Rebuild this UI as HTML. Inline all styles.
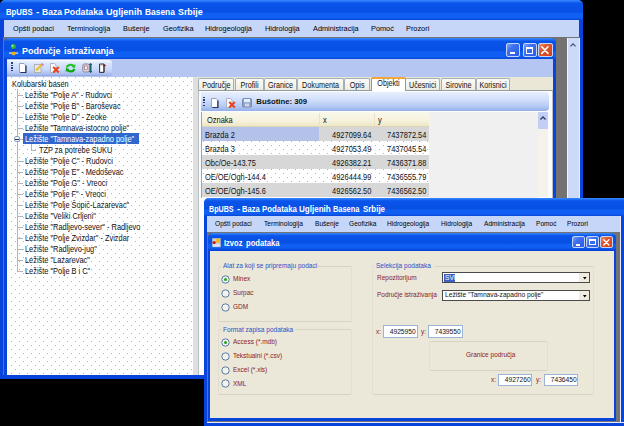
<!DOCTYPE html>
<html><head><meta charset="utf-8">
<style>
*{margin:0;padding:0;box-sizing:border-box}
html,body{width:624px;height:426px;overflow:hidden;background:#000}
body{position:relative;font-family:"Liberation Sans",sans-serif}
.a{position:absolute}
.t{position:absolute;line-height:0;white-space:nowrap;font-family:"Liberation Sans",sans-serif;color:#000;transform-origin:0 50%}
.tb{background:linear-gradient(#3c88f8 0,#2070f8 8%,#0a54ea 16%,#0850e4 58%,#0e5ff2 68%,#0e5ff2 88%,#0a4ee0 96%,#0846d8 100%)}
svg{position:absolute;overflow:visible}
.m1{font-size:8.085px;color:#000;transform:scaleX(0.9091);}
.tr{font-size:8.732px;color:#111;transform:scaleX(0.8475);}
.g{font-size:8.791px;color:#111;transform:scaleX(0.8475);}
.tab{font-size:8.496px;color:#111;transform:scaleX(0.8475);}
.w2{font-size:7.670px;color:#8a1c1c;transform:scaleX(0.8475);}
.w2b{font-size:7.729px;color:#2d50c8;transform:scaleX(0.8475);}
.m2{font-size:7.26px;color:#000;transform:scaleX(0.9091);}
</style></head><body>
<div class="a" style="left:0px;top:0px;width:583px;height:379px;background:#0844dc;border-radius:5px 5px 0 0"></div>
<div class="a tb" style="left:0px;top:0px;width:583px;height:20px;border-radius:5px 5px 0 0"></div>
<div class="t" style="left:5.8px;top:11.8px;font-size:9.9px;font-weight:bold;color:#fff;transform:scaleX(0.7830)">BpUBS</div>
<div class="t" style="left:35.8px;top:11.8px;font-size:9.9px;font-weight:bold;color:#fff;transform:scaleX(1.0309)">-</div>
<div class="t" style="left:41.7px;top:11.8px;font-size:9.9px;font-weight:bold;color:#fff;transform:scaleX(0.8654)">Baza</div>
<div class="t" style="left:64.3px;top:11.8px;font-size:9.9px;font-weight:bold;color:#fff;transform:scaleX(0.8860)">Podataka</div>
<div class="t" style="left:106.2px;top:11.8px;font-size:9.9px;font-weight:bold;color:#fff;transform:scaleX(0.9245)">Ugljenih</div>
<div class="t" style="left:144.8px;top:11.8px;font-size:9.9px;font-weight:bold;color:#fff;transform:scaleX(0.8518)">Basena</div>
<div class="t" style="left:177.6px;top:11.8px;font-size:9.9px;font-weight:bold;color:#fff;transform:scaleX(0.8978)">Srbije</div>
<div class="a" style="left:3.7px;top:20px;width:575.8px;height:17px;background:#c6d6f8"></div>
<div class="a" style="left:4px;top:36.5px;width:575px;height:1.5px;background:#9aa4b8"></div>
<div class="t m1" style="left:12.8px;top:29px;">Opšti podaci</div>
<div class="t m1" style="left:67.2px;top:29px;">Terminologija</div>
<div class="t m1" style="left:123px;top:29px;">Bušenje</div>
<div class="t m1" style="left:162.8px;top:29px;">Geofizika</div>
<div class="t m1" style="left:205.1px;top:29px;">Hidrogeologija</div>
<div class="t m1" style="left:265.4px;top:29px;">Hidrologija</div>
<div class="t m1" style="left:312.8px;top:29px;">Administracija</div>
<div class="t m1" style="left:371.3px;top:29px;">Pomoć</div>
<div class="t m1" style="left:406.4px;top:29px;">Prozori</div>
<div class="a" style="left:3px;top:37px;width:577px;height:338px;background:#737373"></div>
<div class="a" style="left:567px;top:38px;width:12.5px;height:337px;background:#cdd9f8;border-left:1px solid #f4f6fe;border-right:1px solid #eef0fa"></div>
<svg style="left:569.8px;top:42.6px" width="6" height="4"><path d="M0.5 3.3 L3 0.8 L5.5 3.3" stroke="#3a4a78" stroke-width="1.2" fill="none"/></svg>
<div class="a" style="left:4px;top:38px;width:552px;height:340px;background:#0844dc;border-radius:5px 5px 0 0"></div>
<div class="a tb" style="left:4px;top:38px;width:552px;height:21px;border-radius:5px 5px 0 0"></div>
<div class="a" style="left:505.9px;top:43px;width:14.5px;height:14px;background:linear-gradient(135deg,#7ea4fb 0,#3f72ef 35%,#2a5ae6 100%);border:1px solid #c4d4fa;border-radius:2px"></div>
<div class="a" style="left:509.79999999999995px;top:52.1px;width:5.2px;height:1.8px;background:#fff"></div>
<div class="a" style="left:522.6px;top:43px;width:14.5px;height:14px;background:linear-gradient(135deg,#7ea4fb 0,#3f72ef 35%,#2a5ae6 100%);border:1px solid #c4d4fa;border-radius:2px"></div>
<div class="a" style="left:526.0px;top:46.5px;width:7.3px;height:7.3px;border:1px solid #fff;border-top-width:2px"></div>
<div class="a" style="left:538.3px;top:43px;width:14.5px;height:14px;background:linear-gradient(135deg,#f0906a 0,#e2582e 35%,#d43e14 100%);border:1px solid #c4d4fa;border-radius:2px"></div>
<svg style="left:541.4px;top:46.0px" width="7.8" height="8.2"><path d="M0.8 0.8 L7.0 7.3999999999999995 M7.0 0.8 L0.8 7.3999999999999995" stroke="#fff" stroke-width="1.6" stroke-linecap="round"/></svg>
<svg style="left:8.8px;top:43.5px" width="10" height="12" viewBox="0 0 10 12"><path d="M4.5 3 V8" stroke="#203050" stroke-width="1.2"/><circle cx="4.3" cy="2.6" r="2.5" fill="#30b040"/><circle cx="3.6" cy="1.8" r="1" fill="#a0f0a0"/><path d="M0 9.1 H9" stroke="#e8e0d0" stroke-width="1.3"/><ellipse cx="4.6" cy="9.4" rx="2" ry="1.9" fill="#f0b020"/></svg>
<div class="t" style="left:22px;top:50.8px;font-size:9.6px;font-weight:bold;color:#fff;transform:scaleX(0.9373)">Područje</div>
<div class="t" style="left:63.7px;top:50.8px;font-size:9.6px;font-weight:bold;color:#fff;transform:scaleX(0.9504)">istraživanja</div>
<div class="a" style="left:7px;top:59px;width:546px;height:18px;background:#b6c6f2"></div>
<div class="a" style="left:7px;top:59.6px;width:105px;height:16px;border-radius:0 3px 3px 0;background:linear-gradient(#f4f8ff 0,#dce7fd 20%,#c8d8fb 60%,#a8bcee 90%,#8ca4e0 100%)"></div>
<div class="a" style="left:11px;top:62.0px;width:1.5px;height:1.5px;background:#2c3e7a"></div>
<div class="a" style="left:11px;top:64.6px;width:1.5px;height:1.5px;background:#2c3e7a"></div>
<div class="a" style="left:11px;top:67.2px;width:1.5px;height:1.5px;background:#2c3e7a"></div>
<div class="a" style="left:11px;top:69.8px;width:1.5px;height:1.5px;background:#2c3e7a"></div>
<svg style="left:19px;top:63px" width="8" height="10" viewBox="0 0 8 10"><path d="M0.5 0.5 H5 L7.5 3 V9.5 H0.5 Z" fill="#fdfdfd" stroke="#8090b0" stroke-width="0.8"/><path d="M6.8 2.5 V9.5 H1.5" stroke="#26306a" stroke-width="1.2" fill="none"/></svg>
<svg style="left:34.3px;top:62.8px" width="10" height="10" viewBox="0 0 10 10"><rect x="0.5" y="1.5" width="6.5" height="8" fill="#e8e8e4" stroke="#a8a8a0" stroke-width="0.8"/><path d="M2 7.5 L8.5 1" stroke="#e8c040" stroke-width="2.2"/><path d="M7.5 0.5 L9.5 2.5" stroke="#e070b0" stroke-width="1.6"/></svg>
<svg style="left:50.2px;top:63px" width="10" height="10" viewBox="0 0 10 10"><path d="M0.5 0.5 H4.5 L6 2 V9.5 H0.5 Z" fill="#f8f8f8" stroke="#a0a8b8" stroke-width="0.8"/><path d="M3.2 4 L8.8 9.5 M8.8 4 L3.2 9.5" stroke="#e8401a" stroke-width="1.9"/></svg>
<svg style="left:65.2px;top:62.6px" width="11" height="10" viewBox="0 0 11 10"><path d="M1.5 4.5 C2.5 1.5 7 0.8 9 3.2" stroke="#22c022" stroke-width="2.2" fill="none"/><path d="M10.5 1 L10 5 L6.5 4 Z" fill="#22c022"/><path d="M9.5 5.8 C8.5 8.8 4 9.2 2 6.8" stroke="#10a810" stroke-width="2.2" fill="none"/><path d="M0.5 9 L1 5 L4.5 6 Z" fill="#10a810"/></svg>
<svg style="left:81.5px;top:62.8px" width="10" height="10" viewBox="0 0 10 10"><rect x="0.8" y="1" width="6.5" height="8" rx="1.5" fill="#e6d0d8" stroke="#808090" stroke-width="0.9"/><rect x="2.5" y="3" width="3" height="3.5" fill="#f8f0f0" stroke="#906878" stroke-width="0.6"/><path d="M8.6 0.5 V9.5" stroke="#20606a" stroke-width="1.8"/><path d="M7.2 2 L8.6 0.5 L10 2 M7.2 8 L8.6 9.5 L10 8" stroke="#20606a" stroke-width="1" fill="none"/></svg>
<svg style="left:98.5px;top:62.8px" width="8" height="10" viewBox="0 0 8 10"><path d="M0.5 1 H5 V9.5 H0.5 Z" fill="#d8d8d8" stroke="#404040" stroke-width="1"/><rect x="1.6" y="3" width="2.5" height="5" fill="#fff"/><path d="M4.5 1 L7.5 2.5 L4.5 4" fill="#e02020"/><path d="M5 1 V9" stroke="#303030" stroke-width="1"/></svg>
<div class="a" style="left:7px;top:77px;width:186px;height:298px;background:#fff"></div>
<svg style="left:8px;top:77px" width="185" height="298"><defs><pattern id="dp1" patternUnits="userSpaceOnUse" x="-8" y="-77" width="8" height="8"><rect x="3" y="5" width="1" height="1" fill="#b4b4b4"/><rect x="7" y="1" width="1" height="1" fill="#b4b4b4"/></pattern></defs><rect width="185" height="298" fill="url(#dp1)"/></svg>
<div class="a" style="left:193px;top:77px;width:4.5px;height:298px;background:#dfdfe0"></div>
<div class="a" style="left:197.5px;top:77px;width:355.5px;height:13px;background:#ebe7d6"></div>
<div class="a" style="left:17px;top:89.2px;width:1px;height:181.5px;background:#b4b4b4"></div>
<div class="t tr" style="left:11.8px;top:83.7px;">Kolubarski basen</div>
<div class="a" style="left:17px;top:94.7px;width:6px;height:1px;background:#b4b4b4"></div>
<div class="t tr" style="left:24.9px;top:94.7px;">Ležište "Polje A" - Rudovci</div>
<div class="a" style="left:17px;top:105.7px;width:6px;height:1px;background:#b4b4b4"></div>
<div class="t tr" style="left:24.9px;top:105.7px;">Ležište "Polje B" - Baroševac</div>
<div class="a" style="left:17px;top:116.7px;width:6px;height:1px;background:#b4b4b4"></div>
<div class="t tr" style="left:24.9px;top:116.7px;">Ležište "Polje D" - Zeoke</div>
<div class="a" style="left:17px;top:127.7px;width:6px;height:1px;background:#b4b4b4"></div>
<div class="t tr" style="left:24.9px;top:127.7px;">Ležište "Tamnava-istocno polje"</div>
<div class="a" style="left:17px;top:138.7px;width:6px;height:1px;background:#b4b4b4"></div>
<div class="a" style="left:13.8px;top:135.7px;width:6.5px;height:6.5px;background:#f4f4f0;border:1px solid #8da0b8;border-radius:2px"></div>
<div class="a" style="left:15.3px;top:138.5px;width:3.5px;height:1px;background:#203060"></div>
<div class="a" style="left:23px;top:133.2px;width:115.5px;height:11px;background:#3166cc"></div>
<div class="t tr" style="left:24.9px;top:138.7px;color:#fff">Ležište "Tamnava-zapadno polje"</div>
<div class="a" style="left:31px;top:143.7px;width:1px;height:6.0px;background:#b4b4b4"></div>
<div class="a" style="left:31px;top:149.7px;width:5px;height:1px;background:#b4b4b4"></div>
<div class="t tr" style="left:38.5px;top:149.7px;">TZP za potrebe SUKU</div>
<div class="a" style="left:17px;top:160.7px;width:6px;height:1px;background:#b4b4b4"></div>
<div class="t tr" style="left:24.9px;top:160.7px;">Ležište "Polje C" - Rudovci</div>
<div class="a" style="left:17px;top:171.7px;width:6px;height:1px;background:#b4b4b4"></div>
<div class="t tr" style="left:24.9px;top:171.7px;">Ležište "Polje E" - Medoševac</div>
<div class="a" style="left:17px;top:182.7px;width:6px;height:1px;background:#b4b4b4"></div>
<div class="t tr" style="left:24.9px;top:182.7px;">Ležište "Polje G" - Vreoci</div>
<div class="a" style="left:17px;top:193.7px;width:6px;height:1px;background:#b4b4b4"></div>
<div class="t tr" style="left:24.9px;top:193.7px;">Ležište "Polje F" - Vreoci</div>
<div class="a" style="left:17px;top:204.7px;width:6px;height:1px;background:#b4b4b4"></div>
<div class="t tr" style="left:24.9px;top:204.7px;">Ležište "Polje Šopić-Lazarevac"</div>
<div class="a" style="left:17px;top:215.7px;width:6px;height:1px;background:#b4b4b4"></div>
<div class="t tr" style="left:24.9px;top:215.7px;">Ležište "Veliki Crljeni"</div>
<div class="a" style="left:17px;top:226.7px;width:6px;height:1px;background:#b4b4b4"></div>
<div class="t tr" style="left:24.9px;top:226.7px;">Ležište "Radljevo-sever" - Radljevo</div>
<div class="a" style="left:17px;top:237.7px;width:6px;height:1px;background:#b4b4b4"></div>
<div class="t tr" style="left:24.9px;top:237.7px;">Ležište "Polje Zvizdar" - Zvizdar</div>
<div class="a" style="left:17px;top:248.7px;width:6px;height:1px;background:#b4b4b4"></div>
<div class="t tr" style="left:24.9px;top:248.7px;">Ležište "Radljevo-jug"</div>
<div class="a" style="left:17px;top:259.7px;width:6px;height:1px;background:#b4b4b4"></div>
<div class="t tr" style="left:24.9px;top:259.7px;">Ležište "Lazarevac"</div>
<div class="a" style="left:17px;top:270.7px;width:6px;height:1px;background:#b4b4b4"></div>
<div class="t tr" style="left:24.9px;top:270.7px;">Ležište "Polje B i C"</div>
<div class="a" style="left:197.6px;top:78px;width:36.900000000000006px;height:12.5px;background:linear-gradient(#fbfbf8,#ecebe2);border:1px solid #a7aeb3;border-bottom:none;border-radius:2px 2px 0 0"></div>
<div class="t tab" style="left:197.6px;width:36.900000000000006px;text-align:center;top:84.8px;transform-origin:50% 50%">Područje</div>
<div class="a" style="left:234.5px;top:78px;width:29.0px;height:12.5px;background:linear-gradient(#fbfbf8,#ecebe2);border:1px solid #a7aeb3;border-bottom:none;border-radius:2px 2px 0 0"></div>
<div class="t tab" style="left:234.5px;width:29.0px;text-align:center;top:84.8px;transform-origin:50% 50%">Profili</div>
<div class="a" style="left:263.5px;top:78px;width:33.0px;height:12.5px;background:linear-gradient(#fbfbf8,#ecebe2);border:1px solid #a7aeb3;border-bottom:none;border-radius:2px 2px 0 0"></div>
<div class="t tab" style="left:263.5px;width:33.0px;text-align:center;top:84.8px;transform-origin:50% 50%">Granice</div>
<div class="a" style="left:296.5px;top:78px;width:47.0px;height:12.5px;background:linear-gradient(#fbfbf8,#ecebe2);border:1px solid #a7aeb3;border-bottom:none;border-radius:2px 2px 0 0"></div>
<div class="t tab" style="left:296.5px;width:47.0px;text-align:center;top:84.8px;transform-origin:50% 50%">Dokumenta</div>
<div class="a" style="left:343.5px;top:78px;width:26.30000000000001px;height:12.5px;background:linear-gradient(#fbfbf8,#ecebe2);border:1px solid #a7aeb3;border-bottom:none;border-radius:2px 2px 0 0"></div>
<div class="t tab" style="left:343.5px;width:26.30000000000001px;text-align:center;top:84.8px;transform-origin:50% 50%">Opis</div>
<div class="a" style="left:405.4px;top:78px;width:35.10000000000002px;height:12.5px;background:linear-gradient(#fbfbf8,#ecebe2);border:1px solid #a7aeb3;border-bottom:none;border-radius:2px 2px 0 0"></div>
<div class="t tab" style="left:405.4px;width:35.10000000000002px;text-align:center;top:84.8px;transform-origin:50% 50%">Učesnici</div>
<div class="a" style="left:440.5px;top:78px;width:35.0px;height:12.5px;background:linear-gradient(#fbfbf8,#ecebe2);border:1px solid #a7aeb3;border-bottom:none;border-radius:2px 2px 0 0"></div>
<div class="t tab" style="left:440.5px;width:35.0px;text-align:center;top:84.8px;transform-origin:50% 50%">Sirovine</div>
<div class="a" style="left:475.5px;top:78px;width:34.0px;height:12.5px;background:linear-gradient(#fbfbf8,#ecebe2);border:1px solid #a7aeb3;border-bottom:none;border-radius:2px 2px 0 0"></div>
<div class="t tab" style="left:475.5px;width:34.0px;text-align:center;top:84.8px;transform-origin:50% 50%">Korisnici</div>
<div class="a" style="left:197.5px;top:90px;width:355.5px;height:285px;background:#fcfcfe;border:1px solid #b8c0c8;border-bottom:none;border-top-color:#919b9c"></div>
<div class="a" style="left:370.8px;top:76.6px;width:35px;height:14.5px;background:#fff;border:1px solid #919b9c;border-bottom:none;border-radius:3px 3px 0 0"></div>
<div class="a" style="left:370.8px;top:76.6px;width:35px;height:2px;background:#f3a73a;border-radius:3px 3px 0 0"></div>
<div class="t tab" style="left:370.8px;width:35px;text-align:center;top:83.3px;transform-origin:50% 50%">Objekti</div>
<div class="a" style="left:201px;top:92.4px;width:348px;height:19px;border-radius:0 4px 4px 0;background:linear-gradient(#e8effe 0,#d2e0fb 40%,#b5c9f4 75%,#94afe8 100%)"></div>
<div class="a" style="left:203.2px;top:96.7px;width:1.5px;height:1.5px;background:#2c3e7a"></div>
<div class="a" style="left:203.2px;top:99.3px;width:1.5px;height:1.5px;background:#2c3e7a"></div>
<div class="a" style="left:203.2px;top:101.9px;width:1.5px;height:1.5px;background:#2c3e7a"></div>
<div class="a" style="left:203.2px;top:104.5px;width:1.5px;height:1.5px;background:#2c3e7a"></div>
<svg style="left:211.2px;top:97.5px" width="8" height="10" viewBox="0 0 8 10"><path d="M0.5 0.5 H5 L7.5 3 V9.5 H0.5 Z" fill="#fdfdfd" stroke="#8090b0" stroke-width="0.8"/><path d="M6.8 2.5 V9.5 H1.5" stroke="#26306a" stroke-width="1.2" fill="none"/></svg>
<svg style="left:226px;top:97.5px" width="10" height="10" viewBox="0 0 10 10"><path d="M0.5 0.5 H4.5 L6 2 V9.5 H0.5 Z" fill="#f8f8f8" stroke="#a0a8b8" stroke-width="0.8"/><path d="M3.2 4 L8.8 9.5 M8.8 4 L3.2 9.5" stroke="#e8401a" stroke-width="1.9"/></svg>
<svg style="left:241.8px;top:98px" width="10" height="9" viewBox="0 0 10 9"><rect x="0.5" y="0.5" width="9" height="8.5" rx="1" fill="#8aa0c8" stroke="#6a80a8" stroke-width="0.8"/><rect x="2" y="1" width="6" height="3.2" fill="#e8eef8"/><rect x="2.8" y="5.5" width="4.4" height="3" fill="#d0d8e8"/></svg>
<div class="t " style="left:256.3px;top:101.5px;font-size:7.75px;font-weight:bold;color:#101010">Bušotine: 309</div>
<div class="a" style="left:201px;top:111.5px;width:228.2px;height:85.5px;background:#fff"></div>
<div class="a" style="left:429.2px;top:111.5px;width:108.5px;height:180px;background:#f0f0f0"></div>
<div class="a" style="left:201px;top:111.5px;width:228.2px;height:15.3px;background:linear-gradient(#faf8ec 0,#f6f2dc 60%,#efe8c4 100%);border-bottom:1px solid #dcd6b8"></div>
<div class="a" style="left:318.6px;top:113px;width:1px;height:12px;background:#e6e2d0"></div>
<div class="a" style="left:374.4px;top:113px;width:1px;height:12px;background:#e6e2d0"></div>
<div class="t g" style="left:207px;top:119.7px;">Oznaka</div>
<div class="t g" style="left:323px;top:119.9px;">x</div>
<div class="t g" style="left:377.5px;top:119.9px;">y</div>
<div class="a" style="left:201px;top:126.5px;width:228.2px;height:14px;background:#d7d7d7"></div>
<div class="a" style="left:201px;top:126.5px;width:117.6px;height:14px;background:#b4c2ea"></div>
<div class="t g" style="left:204.9px;top:134.8px;">Brazda 2</div>
<div class="t g" style="right:252.7px;top:134.8px;transform-origin:100% 50%;">4927099.64</div>
<div class="t g" style="right:197.5px;top:134.8px;transform-origin:100% 50%;">7437872.54</div>
<div class="a" style="left:201px;top:140.5px;width:228.2px;height:14px;background:#ffffff"></div>
<svg style="left:202px;top:141px" width="227" height="13"><defs><pattern id="dp2" patternUnits="userSpaceOnUse" x="-202" y="-141" width="8" height="8"><rect x="3" y="5" width="1" height="1" fill="#b4b4b4"/><rect x="7" y="1" width="1" height="1" fill="#b4b4b4"/></pattern></defs><rect width="227" height="13" fill="url(#dp2)"/></svg>
<div class="t g" style="left:204.9px;top:148.8px;">Brazda 3</div>
<div class="t g" style="right:252.7px;top:148.8px;transform-origin:100% 50%;">4927053.49</div>
<div class="t g" style="right:197.5px;top:148.8px;transform-origin:100% 50%;">7437045.54</div>
<div class="a" style="left:201px;top:154.5px;width:228.2px;height:14px;background:#d7d7d7"></div>
<div class="t g" style="left:204.9px;top:162.8px;">Obc/Oe-143.75</div>
<div class="t g" style="right:252.7px;top:162.8px;transform-origin:100% 50%;">4926382.21</div>
<div class="t g" style="right:197.5px;top:162.8px;transform-origin:100% 50%;">7436371.88</div>
<div class="a" style="left:201px;top:168.5px;width:228.2px;height:14px;background:#ffffff"></div>
<svg style="left:202px;top:169px" width="227" height="13"><defs><pattern id="dp3" patternUnits="userSpaceOnUse" x="-202" y="-169" width="8" height="8"><rect x="3" y="5" width="1" height="1" fill="#b4b4b4"/><rect x="7" y="1" width="1" height="1" fill="#b4b4b4"/></pattern></defs><rect width="227" height="13" fill="url(#dp3)"/></svg>
<div class="t g" style="left:204.9px;top:176.8px;">OE/OE/Ogh-144.4</div>
<div class="t g" style="right:252.7px;top:176.8px;transform-origin:100% 50%;">4926444.99</div>
<div class="t g" style="right:197.5px;top:176.8px;transform-origin:100% 50%;">7436555.79</div>
<div class="a" style="left:201px;top:182.5px;width:228.2px;height:14px;background:#d7d7d7"></div>
<div class="t g" style="left:204.9px;top:190.8px;">OE/OE/Ogh-145.6</div>
<div class="t g" style="right:252.7px;top:190.8px;transform-origin:100% 50%;">4926562.50</div>
<div class="t g" style="right:197.5px;top:190.8px;transform-origin:100% 50%;">7436562.50</div>
<div class="a" style="left:201px;top:111.5px;width:1px;height:86px;background:#9aa6b0"></div>
<div class="a" style="left:537.6px;top:112.4px;width:10.6px;height:85px;background:#f4f2ea"></div>
<div class="a" style="left:537.6px;top:112.4px;width:10.6px;height:16.5px;background:#c3cef6;border-radius:1px"></div>
<svg style="left:540px;top:116px" width="6" height="4"><path d="M0.5 3.5 L3 1 L5.5 3.5" stroke="#2a3a6a" stroke-width="1.3" fill="none"/></svg>
<!-- W2 -->
<div class="a" style="left:204px;top:198px;width:424px;height:232px;background:#0844dc;border-radius:5px 5px 0 0"></div>
<div class="a tb" style="left:204px;top:198px;width:424px;height:18px;border-radius:5px 5px 0 0"></div>
<div class="t" style="left:208.6px;top:208.6px;font-size:9.0px;font-weight:bold;color:#fff;transform:scaleX(0.7936)">BpUBS</div>
<div class="t" style="left:237px;top:208.6px;font-size:9.0px;font-weight:bold;color:#fff;transform:scaleX(1.0673)">-</div>
<div class="t" style="left:241.7px;top:208.6px;font-size:9.0px;font-weight:bold;color:#fff;transform:scaleX(0.8424)">Baza</div>
<div class="t" style="left:261.6px;top:208.6px;font-size:9.0px;font-weight:bold;color:#fff;transform:scaleX(0.8721)">Podataka</div>
<div class="t" style="left:298.8px;top:208.6px;font-size:9.0px;font-weight:bold;color:#fff;transform:scaleX(0.8930)">Ugljenih</div>
<div class="t" style="left:333.4px;top:208.6px;font-size:9.0px;font-weight:bold;color:#fff;transform:scaleX(0.8245)">Basena</div>
<div class="t" style="left:362.6px;top:208.6px;font-size:9.0px;font-weight:bold;color:#fff;transform:scaleX(0.8796)">Srbije</div>
<div class="a" style="left:207px;top:216px;width:413.3px;height:16.3px;background:#c6d6f8"></div>
<div class="t m2" style="left:215px;top:224px;">Opšti podaci</div>
<div class="t m2" style="left:263.5px;top:224px;">Terminologija</div>
<div class="t m2" style="left:314.6px;top:224px;">Bušenje</div>
<div class="t m2" style="left:348.8px;top:224px;">Geofizika</div>
<div class="t m2" style="left:387px;top:224px;">Hidrogeologija</div>
<div class="t m2" style="left:440.75px;top:224px;">Hidrologija</div>
<div class="t m2" style="left:483.5px;top:224px;">Administracija</div>
<div class="t m2" style="left:536px;top:224px;">Pomoć</div>
<div class="t m2" style="left:566.75px;top:224px;">Prozori</div>
<div class="a" style="left:207px;top:231.5px;width:413.3px;height:190.5px;background:#737373"></div>
<div class="a" style="left:620.3px;top:216px;width:0.8px;height:207px;background:#e8ecf8"></div>
<div class="a" style="left:207px;top:422px;width:417px;height:1px;background:#e8ecf8"></div>
<div class="a" style="left:208.3px;top:232.6px;width:407.6px;height:188.4px;background:#0844dc;border-radius:5px 5px 0 0"></div>
<div class="a tb" style="left:208.3px;top:232.6px;width:407.6px;height:17.8px;border-radius:5px 5px 0 0"></div>
<div class="a" style="left:572.3px;top:236.4px;width:12.5px;height:11.7px;background:linear-gradient(135deg,#7ea4fb 0,#3f72ef 35%,#2a5ae6 100%);border:1px solid #c4d4fa;border-radius:2px"></div>
<div class="a" style="left:575.6620689655172px;top:244.005px;width:4.482758620689655px;height:1.5042857142857142px;background:#fff"></div>
<div class="a" style="left:586.3px;top:236.4px;width:12.5px;height:11.7px;background:linear-gradient(135deg,#7ea4fb 0,#3f72ef 35%,#2a5ae6 100%);border:1px solid #c4d4fa;border-radius:2px"></div>
<div class="a" style="left:589.2310344827586px;top:239.32500000000002px;width:6.293103448275861px;height:6.100714285714285px;border:1px solid #fff;border-top-width:2px"></div>
<div class="a" style="left:600.4px;top:236.4px;width:12.5px;height:11.7px;background:linear-gradient(135deg,#f0906a 0,#e2582e 35%,#d43e14 100%);border:1px solid #c4d4fa;border-radius:2px"></div>
<svg style="left:603.0724137931035px;top:238.90714285714287px" width="6.724137931034482" height="6.852857142857141"><path d="M0.8 0.8 L5.924137931034482 6.052857142857142 M5.924137931034482 0.8 L0.8 6.052857142857142" stroke="#fff" stroke-width="1.3793103448275863" stroke-linecap="round"/></svg>
<svg style="left:211.9px;top:237.9px" width="9" height="9" viewBox="0 0 9 9"><rect x="0.3" y="0.3" width="8.3" height="8.6" fill="#c8d0e0" stroke="#a0a8c0" stroke-width="0.6"/><rect x="4" y="0.7" width="3.8" height="4" fill="#f4b820"/><circle cx="2.2" cy="4.6" r="1.6" fill="#d01818"/><rect x="1" y="6.3" width="7" height="2.2" fill="#e0e8f4"/></svg>
<div class="t" style="left:223.9px;top:243.4px;font-size:8.4px;font-weight:bold;color:#fff;transform:scaleX(0.9008)">Izvoz</div>
<div class="t" style="left:246.4px;top:243.4px;font-size:8.4px;font-weight:bold;color:#fff;transform:scaleX(0.9111)">podataka</div>
<div class="a" style="left:210.3px;top:250.6px;width:403.8px;height:167.6px;background:#ebe7d9"></div>
<div class="a" style="left:218px;top:265.6px;width:134px;height:56px;border:1px solid #d6d2c4;border-left-color:#e2dfd2;border-right-color:#e2dfd2;border-radius:2px"></div>
<div class="a" style="left:218px;top:329.3px;width:134px;height:66px;border:1px solid #d6d2c4;border-left-color:#e2dfd2;border-right-color:#e2dfd2;border-radius:2px"></div>
<div class="a" style="left:372px;top:265.6px;width:221.5px;height:129.5px;border:1px solid #d6d2c4;border-left-color:#e2dfd2;border-right-color:#e2dfd2;border-radius:2px"></div>
<div class="a" style="left:428.7px;top:340.7px;width:119.6px;height:30.2px;border:1px solid #d6d2c4;border-left-color:#e2dfd2;border-right-color:#e2dfd2;border-radius:2px"></div>
<div class="a" style="left:221.2px;top:262.8px;width:96.5px;height:6px;background:#ebe7d9"></div>
<div class="t w2b" style="left:223.2px;top:265.8px;">Alat za koji se pripremaju podaci</div>
<div class="a" style="left:221.3px;top:326.9px;width:74px;height:6px;background:#ebe7d9"></div>
<div class="t w2b" style="left:223.3px;top:329.9px;">Format zapisa podataka</div>
<div class="a" style="left:374.3px;top:263.1px;width:60.4px;height:6px;background:#ebe7d9"></div>
<div class="t w2b" style="left:376.3px;top:266.1px;">Selekcija podataka</div>
<svg style="left:221.0px;top:274.5px" width="9" height="9"><circle cx="4.5" cy="4.5" r="3.7" fill="#f2f2ee" stroke="#4a6e9a" stroke-width="0.9"/><circle cx="4.5" cy="4.5" r="1.5" fill="#21a121"/></svg>
<div class="t w2" style="left:233px;top:279px;">Minex</div>
<svg style="left:221.0px;top:288.6px" width="9" height="9"><circle cx="4.5" cy="4.5" r="3.7" fill="#f2f2ee" stroke="#4a6e9a" stroke-width="0.9"/></svg>
<div class="t w2" style="left:233px;top:293.1px;">Surpac</div>
<svg style="left:221.0px;top:302.6px" width="9" height="9"><circle cx="4.5" cy="4.5" r="3.7" fill="#f2f2ee" stroke="#4a6e9a" stroke-width="0.9"/></svg>
<div class="t w2" style="left:233px;top:307.1px;">GDM</div>
<svg style="left:220.8px;top:337.6px" width="9" height="9"><circle cx="4.5" cy="4.5" r="3.7" fill="#f2f2ee" stroke="#4a6e9a" stroke-width="0.9"/><circle cx="4.5" cy="4.5" r="1.5" fill="#21a121"/></svg>
<div class="t w2" style="left:233px;top:342.1px;">Access (*.mdb)</div>
<svg style="left:220.8px;top:351.6px" width="9" height="9"><circle cx="4.5" cy="4.5" r="3.7" fill="#f2f2ee" stroke="#4a6e9a" stroke-width="0.9"/></svg>
<div class="t w2" style="left:233px;top:356.1px;">Tekstualni (*.csv)</div>
<svg style="left:220.8px;top:365.5px" width="9" height="9"><circle cx="4.5" cy="4.5" r="3.7" fill="#f2f2ee" stroke="#4a6e9a" stroke-width="0.9"/></svg>
<div class="t w2" style="left:233px;top:370px;">Excel (*.xls)</div>
<svg style="left:220.8px;top:379.4px" width="9" height="9"><circle cx="4.5" cy="4.5" r="3.7" fill="#f2f2ee" stroke="#4a6e9a" stroke-width="0.9"/></svg>
<div class="t w2" style="left:233px;top:383.9px;">XML</div>
<div class="t w2" style="left:376.5px;top:277.9px;">Repozitorijum</div>
<div class="t w2" style="left:376.5px;top:294.6px;">Područje istraživanja</div>
<div class="a" style="left:442.3px;top:272.4px;width:147.4px;height:11.0px;background:#fff;border:1px solid #4a4a4a"></div>
<div class="a" style="left:578.7px;top:273.4px;width:10px;height:9.0px;background:#f0ece0"></div>
<svg style="left:582.6px;top:277.29999999999995px" width="4" height="3"><path d="M0 0 H3.6 L1.8 2.4 Z" fill="#000"/></svg>
<div class="a" style="left:442.3px;top:290.2px;width:147.4px;height:10.5px;background:#fff;border:1px solid #4a4a4a"></div>
<div class="a" style="left:578.7px;top:291.2px;width:10px;height:8.5px;background:#f0ece0"></div>
<svg style="left:582.6px;top:294.84999999999997px" width="4" height="3"><path d="M0 0 H3.6 L1.8 2.4 Z" fill="#000"/></svg>
<div class="t w2" style="left:444.6px;top:295.45px;color:#111;font-size:7.86px">Ležište "Tamnava-zapadno polje"</div>
<div class="a" style="left:443.8px;top:273.8px;width:11.5px;height:8.5px;background:#3a62c4"></div>
<div class="t w2" style="left:444.6px;top:278px;color:#fff;font-size:7.79px">SVI</div>
<div class="t w2" style="left:376.3px;top:332px;">x:</div>
<div class="a" style="left:383px;top:325.3px;width:34.89999999999998px;height:12.5px;background:#fff;border:1px solid #9db4d6"></div>
<div class="t w2" style="right:207.90000000000003px;top:331.55px;transform-origin:100% 50%;color:#111;font-size:7.9px">4925950</div>
<div class="t w2" style="left:420.6px;top:332px;">y:</div>
<div class="a" style="left:428.3px;top:325.3px;width:34.69999999999999px;height:12.5px;background:#fff;border:1px solid #9db4d6"></div>
<div class="t w2" style="right:162.8px;top:331.55px;transform-origin:100% 50%;color:#111;font-size:7.9px">7439550</div>
<div class="t w2" style="left:466px;top:355px;">Granice područja</div>
<div class="t w2" style="left:491px;top:380px;">x:</div>
<div class="a" style="left:497.9px;top:373.8px;width:34.60000000000002px;height:12.0px;background:#fff;border:1px solid #9db4d6"></div>
<div class="t w2" style="right:93.29999999999995px;top:379.8px;transform-origin:100% 50%;color:#111;font-size:7.9px">4927260</div>
<div class="t w2" style="left:536.4px;top:380px;">y:</div>
<div class="a" style="left:543.8px;top:373.8px;width:34.40000000000009px;height:12.0px;background:#fff;border:1px solid #9db4d6"></div>
<div class="t w2" style="right:47.59999999999991px;top:379.8px;transform-origin:100% 50%;color:#111;font-size:7.9px">7436450</div>
</body></html>
